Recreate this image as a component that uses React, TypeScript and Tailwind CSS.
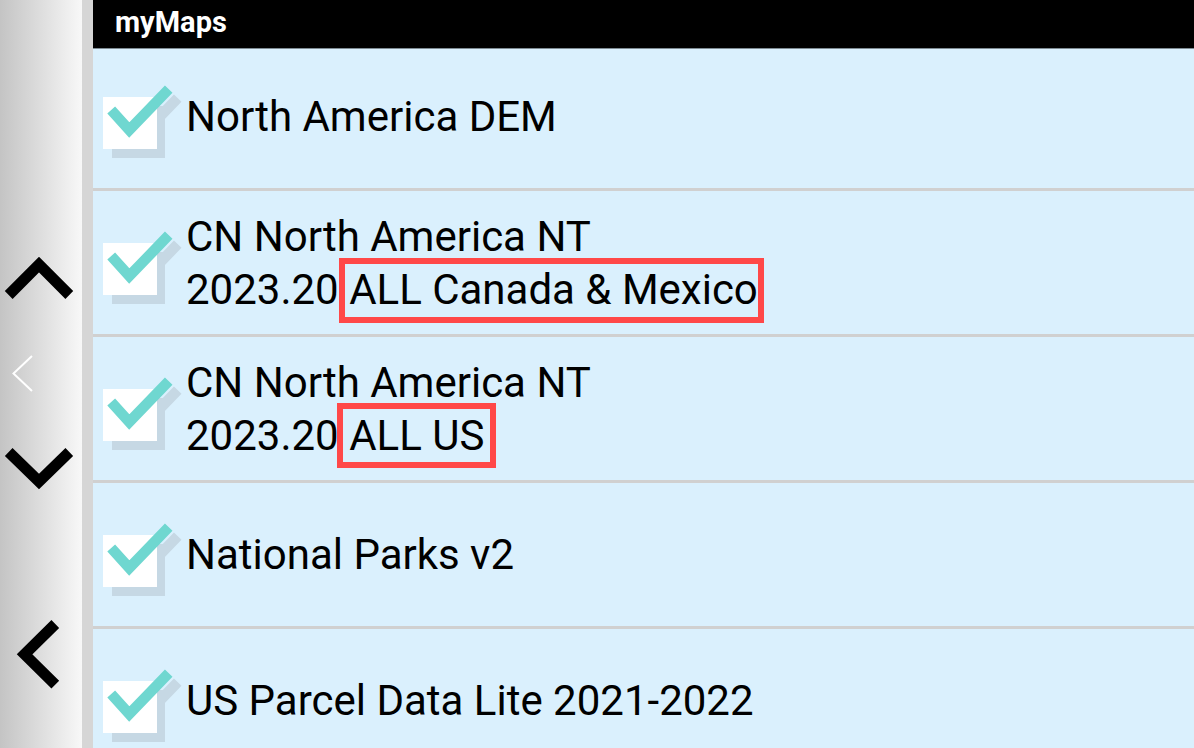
import React from "react";

function Check() {
  return (
    <svg width="84" height="80" viewBox="0 0 84 80" className="shrink-0 mt-[17px] overflow-visible">
      <rect x="12" y="21" width="53" height="52" fill="#c6d8e4" />
      <polyline points="20.2,34 38.3,54 77.7,13.2" fill="none" stroke="#c6d8e4" strokeWidth="10.5" strokeLinejoin="miter" strokeLinecap="butt" />
      <rect x="3" y="12" width="54" height="52" fill="#ffffff" />
      <polyline points="11.2,25 29.3,45 68.7,4.2" fill="none" stroke="#6fd7d0" strokeWidth="10.5" strokeLinejoin="miter" strokeLinecap="butt" />
    </svg>
  );
}

function Boxed({ children, box }: { children: React.ReactNode; box: string }) {
  return (
    <span className="relative whitespace-nowrap">
      {children}
      <span className={"absolute border-[6px] border-[#ff4848] " + box} />
    </span>
  );
}

type Row = { lines: React.ReactNode[]; first?: boolean };

const rows: Row[] = [
  { lines: ["North America DEM"], first: true },
  {
    lines: [
      "CN North America NT",
      <>
        2023.20{" "}
        <Boxed box="-top-[7px] -bottom-[9px] -left-[10px] -right-[6px]">ALL Canada &amp; Mexico</Boxed>
      </>,
    ],
  },
  {
    lines: [
      "CN North America NT",
      <>
        2023.20{" "}
        <Boxed box="-top-[8px] -bottom-[8px] -left-[12px] -right-[12px]">ALL US</Boxed>
      </>,
    ],
  },
  { lines: ["National Parks v2"] },
  { lines: ["US Parcel Data Lite 2021-2022"] },
];

export default function App() {
  return (
    <div className="w-[1194px] h-[748px] flex overflow-hidden font-[Roboto] bg-[#daf0fd]">
      <div className="flex shrink-0">
        <div className="w-[82px] h-full bg-gradient-to-r from-[#c4c4c4] to-[#f8f8f8] flex flex-col pt-[255px]">
          <svg width="82" height="47" viewBox="0 255 82 47" className="overflow-visible">
            <polyline points="8.7,295 39,264.5 69.3,295" fill="none" stroke="#000" strokeWidth="11" strokeLinecap="butt" strokeLinejoin="miter" />
          </svg>
          <svg width="82" height="39" viewBox="0 354 82 39" className="mt-[52px] overflow-visible">
            <polyline points="32,356 13.5,373.5 32,391" fill="none" stroke="#fff" strokeWidth="2" strokeLinecap="butt" strokeLinejoin="miter" />
          </svg>
          <svg width="82" height="47" viewBox="0 444 82 47" className="mt-[51px] overflow-visible">
            <polyline points="8.7,452 39,481.5 69.3,452" fill="none" stroke="#000" strokeWidth="11" strokeLinecap="butt" strokeLinejoin="miter" />
          </svg>
          <svg width="82" height="75" viewBox="0 617 82 75" className="mt-[126px] overflow-visible">
            <polyline points="55.3,624 24.6,654.3 55.3,684.7" fill="none" stroke="#000" strokeWidth="11" strokeLinecap="butt" strokeLinejoin="miter" />
          </svg>
        </div>
        <div className="w-[11px] h-full bg-[#d6d6d6]" />
      </div>
      <div className="flex-1 flex flex-col min-w-0">
        <div className="h-[49px] shrink-0 bg-black border-b border-[#7f8c94] flex items-center pl-[22px] pb-[3px]">
          <span className="text-white font-bold text-[29px] leading-none">myMaps</span>
        </div>
        {rows.map((r, i) => (
          <div key={i} className="shrink-0 flex flex-col">
            {i > 0 && <div className="h-[3px] bg-[#d0d0d0]" />}
            <div
              className={
                "flex items-center pl-[7px] " + (r.first ? "h-[139px] pb-[4px]" : "h-[143px]")
              }
            >
              <Check />
              <div className="ml-[2px] text-[42px] leading-[53px] text-black whitespace-nowrap">
                {r.lines.map((l, j) => (
                  <div key={j}>{l}</div>
                ))}
              </div>
            </div>
          </div>
        ))}
      </div>
    </div>
  );
}
